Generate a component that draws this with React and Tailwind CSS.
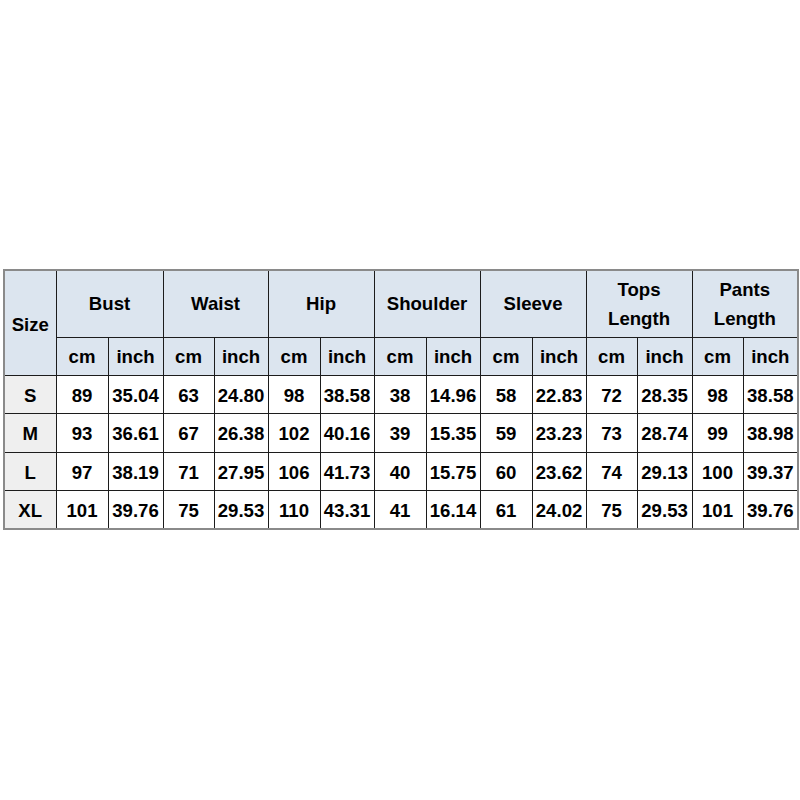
import { Fragment } from 'react'

const groups = [
  { label: ['Bust'], w: [52, 55] },
  { label: ['Waist'], w: [51, 54] },
  { label: ['Hip'], w: [52, 54] },
  { label: ['Shoulder'], w: [52, 54] },
  { label: ['Sleeve'], w: [52, 54] },
  { label: ['Tops', 'Length'], w: [51, 55] },
  { label: ['Pants', 'Length'], w: [51, 55] },
]

const rows = [
  ['S', '89', '35.04', '63', '24.80', '98', '38.58', '38', '14.96', '58', '22.83', '72', '28.35', '98', '38.58'],
  ['M', '93', '36.61', '67', '26.38', '102', '40.16', '39', '15.35', '59', '23.23', '73', '28.74', '99', '38.98'],
  ['L', '97', '38.19', '71', '27.95', '106', '41.73', '40', '15.75', '60', '23.62', '74', '29.13', '100', '39.37'],
  ['XL', '101', '39.76', '75', '29.53', '110', '43.31', '41', '16.14', '61', '24.02', '75', '29.53', '101', '39.76'],
]

const cell = 'border border-[#1c1c1c] text-center align-middle p-0'

export default function App() {
  return (
    <div className="w-[800px] h-[800px] bg-white pt-[269px] pl-[3px] font-['Liberation_Sans',Arial,sans-serif] text-[18.6px] font-bold text-black">
      <table className="table-fixed border-collapse border-2 border-[#8a8a8a] w-[795px]">
        <colgroup>
          <col className="w-[52px]" />
          {groups.map((g, i) => (
            <Fragment key={i}>
              <col style={{ width: g.w[0] }} />
              <col style={{ width: g.w[1] }} />
            </Fragment>
          ))}
        </colgroup>
        <thead>
          <tr className="h-[67px] bg-[#dce5ef]">
            <th rowSpan={2} className={cell + ' pt-[4px]'}>Size</th>
            {groups.map((g) => (
              <th key={g.label[0]} colSpan={2} className={cell + ' leading-[29px]'}>
                {g.label.map((l) => (
                  <div key={l}>{l}</div>
                ))}
              </th>
            ))}
          </tr>
          <tr className="h-[38px] bg-[#dce5ef]">
            {groups.map((g) => (
              <Fragment key={g.label[0]}>
                <th className={cell + ' pt-[2px]'}>cm</th>
                <th className={cell + ' pt-[2px]'}>inch</th>
              </Fragment>
            ))}
          </tr>
        </thead>
        <tbody>
          {rows.map((r) => (
            <tr key={r[0]} className="h-[38.5px]">
              {r.map((v, i) => (
                <td key={i} className={cell + (i === 0 ? ' bg-[#efefef]' : ' bg-white') + ' whitespace-nowrap pt-[3px]'}>
                  {v}
                </td>
              ))}
            </tr>
          ))}
        </tbody>
      </table>
    </div>
  )
}
